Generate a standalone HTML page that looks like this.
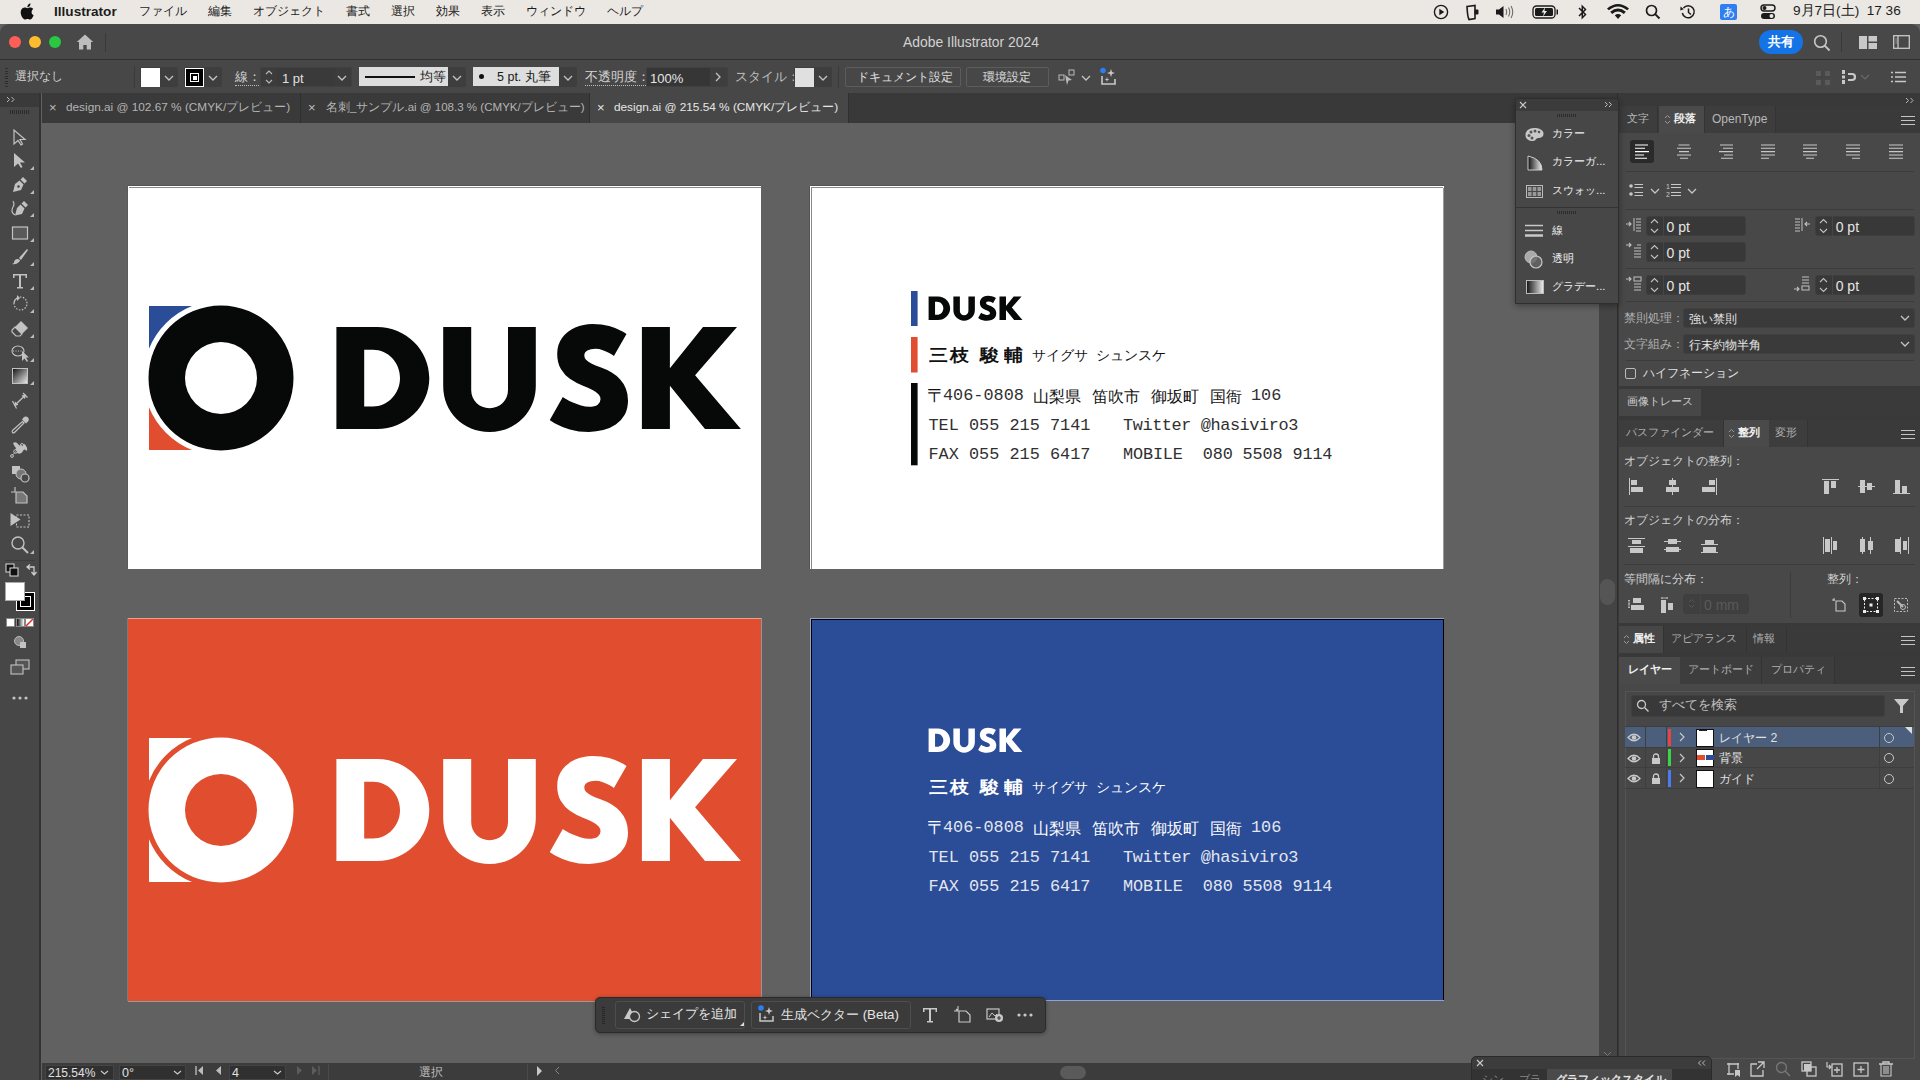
<!DOCTYPE html>
<html lang="ja"><head><meta charset="utf-8">
<style>
*{box-sizing:border-box;margin:0;padding:0}
html,body{width:1920px;height:1080px;overflow:hidden;background:#616161;font-family:"Liberation Sans",sans-serif;}
.a{position:absolute}
.t{position:absolute;white-space:nowrap;line-height:1}
svg{position:absolute;overflow:visible}
/* menubar */
#menubar{left:0;top:0;width:1920px;height:24px;background:#ebe8e3;color:#1c1c1c;font-size:11.8px}
#menubar .t{top:6px}
/* window */
#titlebar{left:0;top:24px;width:1920px;height:35px;background:#484848;border-top-left-radius:9px;border-top-right-radius:9px}
#ctrlbar{left:0;top:59px;width:1920px;height:34px;background:#474747;border-top:1px solid #2f2f2f}
#tabbar{left:42px;top:93px;width:1575px;height:30px;background:#393939}
#toolbar{left:0;top:93px;width:41px;height:987px;background:#474747;border-right:2px solid #333}
#canvas{left:42px;top:123px;width:1557px;height:940px;background:#616161}
#vscroll{left:1599px;top:123px;width:18px;height:940px;background:#444}
#dock{left:1617px;top:93px;width:303px;height:987px;background:#393939;border-left:1px solid #2e2e2e}
#status{left:42px;top:1063px;width:1557px;height:17px;background:#3c3c3c}
.ui{color:#cfcfcf;font-size:12px}
</style></head><body>

<!-- CANVAS -->
<div id="canvas" class="a"></div>

<svg width="1920" height="1080" style="left:0;top:0" viewBox="0 0 1920 1080">
<defs>
<g id="dusk">
<path fill-rule="evenodd" d="M336.4 326.9H377C405.9 326.9 429.3 349.8 429.3 378C429.3 406.2 405.9 429 377 429H336.4Z M364.2 349.7H373C388 349.7 400 362.4 400 378C400 393.6 388 406.5 373 406.5H364.2Z"/>
<path d="M443.2 326.9H471.2V390C471.2 400.5 479.2 408.2 489.6 408.2C500 408.2 508 400.5 508 390V326.9H535.8V386C535.8 412 515.8 431.9 489.5 431.9C463.2 431.9 443.2 412 443.2 386Z"/>
<path d="M592.4 324Q601.9 324 609.2 326.1Q616.6 328.3 621 330.7Q625.5 333.1 626.5 334L613.9 356Q612.7 355 609.7 353.3Q606.8 351.6 602.9 350.2Q599.1 348.8 595.3 348.8Q590.5 348.8 587.4 350.4Q584.3 352 584.3 355.4Q584.3 357.8 586 359.7Q587.6 361.6 591.3 363.4Q595 365.3 601.1 367.6Q606.8 369.6 611.7 372.5Q616.6 375.4 620.2 379.4Q623.9 383.4 625.9 388.7Q628 393.9 628 400.5Q628 408.8 624.7 414.7Q621.4 420.7 615.8 424.5Q610.2 428.3 603.3 430.1Q596.3 431.9 589 431.9Q578.2 431.9 569.8 429.4Q561.3 426.9 556.1 424Q550.9 421.1 549.8 420L562.8 397Q563.7 397.7 566.4 399.3Q569.1 400.9 572.9 402.6Q576.8 404.3 581 405.5Q585.2 406.8 589.1 406.8Q594.8 406.8 597.7 404.7Q600.5 402.7 600.5 399.2Q600.5 396.6 598.7 394.5Q597 392.4 593 390.3Q589.1 388.2 582.4 385.6Q576 383 570.2 379.1Q564.5 375.2 560.9 369Q557.2 362.9 557.2 353.7Q557.2 344.5 562.2 337.8Q567.2 331.2 575.2 327.6Q583.3 324 592.4 324Z"/>
<path d="M641.9 326.9H669.9V368.3L703 326.9H737L695.1 375.2L740.9 429H705L669.9 385.8V429H641.9Z"/>
</g>
<path id="ring" fill-rule="evenodd" d="M221 305.5A72.5 72.5 0 1 1 221 450.5A72.5 72.5 0 1 1 221 305.5Z M221 342A36 36 0 1 0 221 414A36 36 0 1 0 221 342Z"/>
<path id="cTop" d="M149 306H192A77.7 77.7 0 0 0 149 348.7Z"/>
<path id="cBot" d="M149 450H192A77.7 77.7 0 0 1 149 407.3Z"/>
</defs>
<!-- artboard TL -->
<rect x="128" y="185" width="633" height="1" fill="#555"/><rect x="128" y="186" width="633" height="383" fill="#fff"/><rect x="129" y="187" width="632" height="1" fill="#8a8a8a"/><rect x="127" y="186" width="1" height="383" fill="#5a5a5a"/>
<use href="#dusk" fill="#070908"/>
<use href="#ring" fill="#070908"/>
<use href="#cTop" fill="#2b4c96"/>
<use href="#cBot" fill="#e14d2f"/>
<!-- artboard TR -->
<rect x="810" y="185" width="634" height="1" fill="#555"/><rect x="809" y="186" width="1" height="383" fill="#555"/><rect x="810" y="186" width="634" height="383" fill="#fff"/><rect x="811" y="187" width="632" height="1" fill="#8a8a8a"/><rect x="811" y="187" width="1" height="382" fill="#8a8a8a"/><rect x="1443" y="188" width="1" height="381" fill="#9a9a9a"/>
<!-- artboard BL -->
<rect x="128" y="618" width="633" height="383" fill="#e14d2f"/><rect x="128" y="618" width="633" height="1" fill="#e9a08f"/><rect x="761" y="618" width="1" height="383" fill="#8a9aa0"/><rect x="128" y="1001" width="634" height="1" fill="#9a9a9a"/><rect x="127" y="618" width="1" height="383" fill="#7a7a7a"/>
<g transform="translate(0,432)" fill="#fff"><use href="#dusk"/><use href="#ring"/><use href="#cTop"/><use href="#cBot"/></g>
<!-- artboard BR -->
<rect x="810" y="618" width="634" height="383" fill="#8ea3d0"/><rect x="811" y="619" width="633" height="381" fill="#000"/><rect x="812" y="620" width="631" height="380" fill="#2b4c96"/>
<!-- small dusk -->
<use href="#dusk" fill="#070908" transform="translate(850.56 220.56) scale(0.232)"/>
<use href="#dusk" fill="#fff" transform="translate(850.56 652.56) scale(0.232)"/>
<rect x="911" y="291" width="6.6" height="35" fill="#2b4c96"/>
<rect x="911" y="337" width="6.6" height="35.5" fill="#e14d2f"/>
<rect x="911" y="383" width="6.6" height="82.3" fill="#070908"/>
</svg>

<!-- card texts -->
<div class="a cardTR" style="left:0;top:0px;color:#111"><div class="t" style="left:929px;top:346.500px;font-size:18px;font-weight:bold;transform:scale(1.05,0.94);transform-origin:0 0">三</div><div class="t" style="left:950px;top:346.500px;font-size:18px;font-weight:bold;transform:scale(1.05,0.94);transform-origin:0 0">枝</div><div class="t" style="left:979.5px;top:346.500px;font-size:18px;font-weight:bold;transform:scale(1.05,0.94);transform-origin:0 0">駿</div><div class="t" style="left:1004px;top:346.500px;font-size:18px;font-weight:bold;transform:scale(1.05,0.94);transform-origin:0 0">輔</div><div class="t" style="left:1032px;top:349px;font-size:13.5px">サイグサ</div><div class="t" style="left:1096px;top:349px;font-size:13.5px">シュンスケ</div><div class="t" style="left:927px;top:386px;font-size:19px">〒</div><div class="t" style="left:943px;top:388px;font-family:'Liberation Mono',monospace;font-size:16.87px;color:#303030">406-0808</div><div class="t" style="left:1033px;top:388px;font-size:16.3px">山梨県</div><div class="t" style="left:1092px;top:388px;font-size:16.3px">笛吹市</div><div class="t" style="left:1150.500px;top:388px;font-size:16.3px">御坂町</div><div class="t" style="left:1210px;top:388px;font-size:16.3px">国衙</div><div class="t" style="left:1251px;top:388px;font-family:'Liberation Mono',monospace;font-size:16.87px;color:#303030">106</div><div class="t" style="left:928.500px;top:418px;font-family:'Liberation Mono',monospace;font-size:16.87px;color:#303030">TEL 055 215 7141</div><div class="t" style="left:1123px;top:418px;font-family:'Liberation Mono',monospace;font-size:16.87px;color:#303030;letter-spacing:-0.4px">Twitter @hasiviro3</div><div class="t" style="left:928.500px;top:447px;font-family:'Liberation Mono',monospace;font-size:16.87px;color:#303030">FAX 055 215 6417</div><div class="t" style="left:1123px;top:447px;font-family:'Liberation Mono',monospace;font-size:16.87px;color:#303030;letter-spacing:-0.15px">MOBILE&nbsp; 080 5508 9114</div></div><div class="a cardBR" style="left:0;top:432px;color:#fff"><div class="t" style="left:929px;top:346.500px;font-size:18px;font-weight:bold;transform:scale(1.05,0.94);transform-origin:0 0">三</div><div class="t" style="left:950px;top:346.500px;font-size:18px;font-weight:bold;transform:scale(1.05,0.94);transform-origin:0 0">枝</div><div class="t" style="left:979.5px;top:346.500px;font-size:18px;font-weight:bold;transform:scale(1.05,0.94);transform-origin:0 0">駿</div><div class="t" style="left:1004px;top:346.500px;font-size:18px;font-weight:bold;transform:scale(1.05,0.94);transform-origin:0 0">輔</div><div class="t" style="left:1032px;top:349px;font-size:13.5px">サイグサ</div><div class="t" style="left:1096px;top:349px;font-size:13.5px">シュンスケ</div><div class="t" style="left:927px;top:386px;font-size:19px">〒</div><div class="t" style="left:943px;top:388px;font-family:'Liberation Mono',monospace;font-size:16.87px;color:#e2e6f0">406-0808</div><div class="t" style="left:1033px;top:388px;font-size:16.3px">山梨県</div><div class="t" style="left:1092px;top:388px;font-size:16.3px">笛吹市</div><div class="t" style="left:1150.500px;top:388px;font-size:16.3px">御坂町</div><div class="t" style="left:1210px;top:388px;font-size:16.3px">国衙</div><div class="t" style="left:1251px;top:388px;font-family:'Liberation Mono',monospace;font-size:16.87px;color:#e2e6f0">106</div><div class="t" style="left:928.500px;top:418px;font-family:'Liberation Mono',monospace;font-size:16.87px;color:#e2e6f0">TEL 055 215 7141</div><div class="t" style="left:1123px;top:418px;font-family:'Liberation Mono',monospace;font-size:16.87px;color:#e2e6f0;letter-spacing:-0.4px">Twitter @hasiviro3</div><div class="t" style="left:928.500px;top:447px;font-family:'Liberation Mono',monospace;font-size:16.87px;color:#e2e6f0">FAX 055 215 6417</div><div class="t" style="left:1123px;top:447px;font-family:'Liberation Mono',monospace;font-size:16.87px;color:#e2e6f0;letter-spacing:-0.15px">MOBILE&nbsp; 080 5508 9114</div></div>

<!-- MENUBAR -->
<div id="menubar" class="a">
<svg style="left:20px;top:3px" width="14" height="17" viewBox="0 0 14 17"><path fill="#111" d="M11.6 9.1c0-2 1.6-2.9 1.7-3-0.9-1.4-2.4-1.6-2.9-1.6-1.2-0.1-2.4 0.7-3 0.7-0.6 0-1.6-0.7-2.6-0.7C3.400 4.5 2.100 5.300 1.400 6.500 0 8.900 1 12.500 2.400 14.500 3.100 15.500 3.900 16.600 4.900 16.500c1-0.0 1.400-0.6 2.600-0.6 1.200 0 1.500 0.6 2.600 0.6 1.100 0 1.800-1 2.400-2 0.800-1.100 1.100-2.200 1.100-2.300-0.0-0.0-2.100-0.800-2.100-3.100zM9.700 3.100c0.500-0.700 0.900-1.600 0.800-2.600-0.800 0-1.800 0.500-2.300 1.200-0.500 0.600-1 1.600-0.800 2.500 0.900 0.100 1.800-0.400 2.300-1.100z"/></svg>
<div class="t" style="left:54px;top:5px;font-weight:bold;font-size:13.6px">Illustrator</div>
<div class="t" style="left:139px">ファイル</div>
<div class="t" style="left:208px">編集</div>
<div class="t" style="left:253px">オブジェクト</div>
<div class="t" style="left:346px">書式</div>
<div class="t" style="left:391px">選択</div>
<div class="t" style="left:436px">効果</div>
<div class="t" style="left:481px">表示</div>
<div class="t" style="left:526px">ウィンドウ</div>
<div class="t" style="left:607px">ヘルプ</div>
<svg style="left:1433px;top:4px" width="16" height="16" viewBox="0 0 16 16"><circle cx="8" cy="8" r="6.6" fill="none" stroke="#1a1a1a" stroke-width="1.4"/><path d="M6.3 4.8V11.2L11.3 8Z" fill="#1a1a1a"/></svg>
<svg style="left:1465px;top:3px" width="16" height="18" viewBox="0 0 16 18"><path d="M2 3.5L10 2.5V15.5L4 16.5Q2.500 14 2 3.5Z" fill="none" stroke="#1a1a1a" stroke-width="1.6"/><rect x="9.500" y="6.500" width="4" height="5" rx="1" fill="#1a1a1a"/></svg>
<svg style="left:1495px;top:4px" width="22" height="16" viewBox="0 0 22 16"><path d="M1 5.500H4L8.500 2V14L4 10.500H1Z" fill="#1a1a1a"/><path d="M11 5Q12.500 8 11 11M13.500 3.500Q16 8 13.500 12.500M16 2Q19.500 8 16 14" fill="none" stroke="#1a1a1a" stroke-width="1.1" opacity=".6"/></svg>
<svg style="left:1532px;top:5px" width="28" height="14" viewBox="0 0 28 14"><rect x="1" y="1" width="22" height="12" rx="3.500" fill="none" stroke="#1a1a1a" stroke-width="1.3"/><rect x="3" y="3" width="18" height="8" rx="1.500" fill="#1a1a1a"/><rect x="24.500" y="4.500" width="1.500" height="5" fill="#1a1a1a"/><path d="M13 2.500L9.500 7.500H12L11 11.500L15 6H12.500Z" fill="#ebe8e3"/></svg>
<svg style="left:1576px;top:3px" width="13" height="18" viewBox="0 0 13 18"><path d="M3 5L9.500 11.500L6.300 14.700V3.300L9.500 6.500L3 13" fill="none" stroke="#1a1a1a" stroke-width="1.500"/></svg>
<svg style="left:1607px;top:4px" width="22" height="16" viewBox="0 0 22 16"><path d="M11 15L7.800 11.300Q11 8.600 14.200 11.300Z M3.200 7.800Q11 1 18.800 7.800L16.800 10Q11 5.200 5.200 10Z M0 4.400Q11 -4.600 22 4.400L20.200 6.300Q11 -1.400 1.800 6.300Z" fill="#1a1a1a"/></svg>
<svg style="left:1645px;top:4px" width="16" height="16" viewBox="0 0 16 16"><circle cx="6.500" cy="6.500" r="5" fill="none" stroke="#1a1a1a" stroke-width="1.700"/><path d="M10.200 10.200L14.500 14.500" stroke="#1a1a1a" stroke-width="1.900"/></svg>
<svg style="left:1679px;top:4px" width="17" height="16" viewBox="0 0 17 16"><path d="M3.300 9A6 6 0 1 0 4.500 4" fill="none" stroke="#1a1a1a" stroke-width="1.500"/><path d="M1.500 2.500L4.800 5.200L1.300 6.500Z" fill="#1a1a1a"/><path d="M9.500 4.500V8.500L12 10.500" fill="none" stroke="#1a1a1a" stroke-width="1.500"/></svg>
<div class="a" style="left:1720px;top:4px;width:17px;height:16px;background:#2f7ff0;border-radius:2px;color:#fff;font-size:12px;line-height:16px;text-align:center">あ</div>
<svg style="left:1760px;top:4px" width="16" height="16" viewBox="0 0 16 16"><rect x="1" y="1" width="14" height="6" rx="3" fill="none" stroke="#1a1a1a" stroke-width="1.400"/><circle cx="4.500" cy="4" r="2" fill="#1a1a1a"/><rect x="1" y="9" width="14" height="6" rx="3" fill="#1a1a1a"/><circle cx="11.500" cy="12" r="2" fill="#ebe8e3"/></svg>
<div class="t" style="left:1793px;top:4px;font-size:13.6px">9月7日(土)&nbsp; 17 36</div>
</div>

<!-- WINDOW CHROME -->
<div id="titlebar" class="a">
<div class="a" style="left:9px;top:12px;width:12px;height:12px;border-radius:50%;background:#fe5f57"></div>
<div class="a" style="left:29px;top:12px;width:12px;height:12px;border-radius:50%;background:#febc2e"></div>
<div class="a" style="left:49px;top:12px;width:12px;height:12px;border-radius:50%;background:#28c840"></div>
<svg style="left:76px;top:10px" width="18" height="16" viewBox="0 0 18 16"><path d="M9 0.500L0.800 8H3V15.500H7.300V11H10.700V15.500H15V8H17.200Z" fill="#bdbdbd"/></svg>
<div class="a" style="left:105px;top:9px;width:1px;height:19px;background:#3a3a3a"></div>
<div class="t" style="left:903px;top:12px;font-size:13.9px;color:#d2d2d2">Adobe Illustrator 2024</div>
<div class="a" style="left:1759px;top:6px;width:44px;height:24px;border-radius:12px;background:#1473e6;color:#fff;font-size:13px;font-weight:bold;line-height:24px;text-align:center">共有</div>
<svg style="left:1813px;top:10px" width="18" height="18" viewBox="0 0 18 18"><circle cx="7.500" cy="7.500" r="5.800" fill="none" stroke="#c8c8c8" stroke-width="1.600"/><path d="M11.700 11.700L16.500 16.500" stroke="#c8c8c8" stroke-width="1.800"/></svg>
<div class="a" style="left:1841px;top:8px;width:1px;height:20px;background:#3a3a3a"></div>
<svg style="left:1859px;top:12px" width="18" height="13" viewBox="0 0 18 13"><rect x="0" y="0" width="8" height="13" fill="#c8c8c8"/><rect x="9.500" y="0" width="8.500" height="5.500" fill="#c8c8c8"/><rect x="9.500" y="7" width="8.500" height="6" fill="#c8c8c8"/></svg>
<svg style="left:1893px;top:11px" width="17" height="14" viewBox="0 0 17 14"><rect x="0.700" y="0.700" width="15.600" height="12.600" fill="none" stroke="#c8c8c8" stroke-width="1.300"/><path d="M5 1V13" stroke="#c8c8c8" stroke-width="1.300"/><path d="M2.500 4H3.700M2.500 6H3.700M2.500 8H3.700" stroke="#c8c8c8" stroke-width="0.900"/></svg>
</div>
<div id="ctrlbar" class="a">
<div class="a" style="left:5px;top:8px;width:3px;height:19px;background:repeating-linear-gradient(#2e2e2e 0 1px,transparent 1px 2.5px)"></div>
<div class="t ui" style="left:15px;top:11px;font-size:11.9px;color:#d0d0d0">選択なし</div>
<div class="a" style="left:134px;top:6px;width:1px;height:22px;background:#3b3b3b"></div>
<div class="a" style="left:140px;top:7px;width:38px;height:20px;border-radius:2px;background:#3e3e3e"></div>
<div class="a" style="left:141px;top:8px;width:19px;height:19px;background:#fff"></div>
<svg style="left:164px;top:15px" width="10" height="6" viewBox="0 0 10 6"><path d="M1 1L5 5L9 1" fill="none" stroke="#c4c4c4" stroke-width="1.300"/></svg>
<div class="a" style="left:184px;top:7px;width:38px;height:20px;border-radius:2px;background:#3e3e3e"></div>
<div class="a" style="left:185px;top:8px;width:19px;height:19px;background:#000;border:1px solid #fff"></div>
<div class="a" style="left:190px;top:13px;width:9px;height:9px;border:1.5px solid #fff"></div>
<div class="a" style="left:192.500px;top:15.500px;width:4px;height:4px;background:#fff"></div>
<svg style="left:208px;top:15px" width="10" height="6" viewBox="0 0 10 6"><path d="M1 1L5 5L9 1" fill="none" stroke="#c4c4c4" stroke-width="1.300"/></svg>
<div class="t ui" style="left:235px;top:11px;font-size:12.500px;color:#d4d4d4;border-bottom:1px dotted #bbb;padding-bottom:1px">線：</div>
<div class="a" style="left:260px;top:7px;width:92px;height:20px;border-radius:2px;background:#3c3c3c;border:1px solid #414141"></div>
<div class="a" style="left:277px;top:8px;width:58px;height:18px;background:#3a3a3a"></div>
<svg style="left:264px;top:9px" width="10" height="16" viewBox="0 0 10 16"><path d="M2 5L5 2L8 5M2 11L5 14L8 11" fill="none" stroke="#bbb" stroke-width="1.100"/></svg>
<div class="t" style="left:282px;top:12px;font-size:13px;color:#e0e0e0">1 pt</div>
<svg style="left:337px;top:15px" width="10" height="6" viewBox="0 0 10 6"><path d="M1 1L5 5L9 1" fill="none" stroke="#c4c4c4" stroke-width="1.300"/></svg>
<div class="a" style="left:359px;top:67px;display:none"></div>
<div class="a" style="left:359px;top:7px;width:89px;height:19px;background:#dedede"></div>
<div class="a" style="left:365px;top:16px;width:50px;height:2px;background:#111"></div>
<div class="t" style="left:420px;top:11px;font-size:12.500px;color:#1a1a1a">均等</div>
<div class="a" style="left:448px;top:7px;width:18px;height:20px;background:#3e3e3e;border-radius:0 2px 2px 0"></div>
<svg style="left:452px;top:15px" width="10" height="6" viewBox="0 0 10 6"><path d="M1 1L5 5L9 1" fill="none" stroke="#c4c4c4" stroke-width="1.300"/></svg>
<div class="a" style="left:473px;top:7px;width:86px;height:19px;background:#dedede"></div>
<div class="a" style="left:479px;top:14px;width:5px;height:5px;border-radius:50%;background:#111"></div>
<div class="t" style="left:497px;top:11px;font-size:12.500px;color:#1a1a1a">5 pt. 丸筆</div>
<div class="a" style="left:559px;top:7px;width:18px;height:20px;background:#3e3e3e;border-radius:0 2px 2px 0"></div>
<svg style="left:563px;top:15px" width="10" height="6" viewBox="0 0 10 6"><path d="M1 1L5 5L9 1" fill="none" stroke="#c4c4c4" stroke-width="1.300"/></svg>
<div class="t ui" style="left:585px;top:11px;font-size:12.500px;color:#d4d4d4;border-bottom:1px dotted #bbb;padding-bottom:1px">不透明度：</div>
<div class="a" style="left:646px;top:7px;width:82px;height:20px;border-radius:2px;background:#3e3e3e;border:1px solid #404040"></div>
<div class="a" style="left:647px;top:8px;width:63px;height:18px;background:#363636"></div>
<div class="t" style="left:650px;top:12px;font-size:13px;color:#e6e6e6">100%</div>
<svg style="left:715px;top:12px" width="6" height="10" viewBox="0 0 6 10"><path d="M1 1L5 5L1 9" fill="none" stroke="#c4c4c4" stroke-width="1.300"/></svg>
<div class="t ui" style="left:735px;top:11px;font-size:12.500px;color:#bdbdbd">スタイル：</div>
<div class="a" style="left:794px;top:7px;width:38px;height:20px;border-radius:2px;background:#3e3e3e"></div>
<div class="a" style="left:795px;top:8px;width:19px;height:19px;background:#e0e0e0"></div>
<svg style="left:818px;top:15px" width="10" height="6" viewBox="0 0 10 6"><path d="M1 1L5 5L9 1" fill="none" stroke="#c4c4c4" stroke-width="1.300"/></svg>
<div class="a" style="left:838px;top:6px;width:1px;height:22px;background:#3b3b3b"></div>
<div class="a" style="left:845px;top:7px;width:116px;height:20px;border-radius:2px;border:1px solid #5c5c5c"></div>
<div class="t" style="left:857px;top:11px;font-size:11.6px;color:#e0e0e0">ドキュメント設定</div>
<div class="a" style="left:966px;top:7px;width:83px;height:20px;border-radius:2px;border:1px solid #5c5c5c"></div>
<div class="t" style="left:983px;top:11px;font-size:12px;color:#e0e0e0">環境設定</div>
<svg style="left:1058px;top:67px;display:none"></svg>
<svg style="left:1058px;top:9px" width="18" height="17" viewBox="0 0 18 17"><rect x="1" y="6" width="5" height="5" fill="none" stroke="#bbb" stroke-width="1"/><rect x="11" y="1" width="5" height="5" fill="none" stroke="#bbb" stroke-width="1"/><path d="M7 6L14 11L10.500 11.500L9 16Z" fill="#bbb"/></svg>
<svg style="left:1081px;top:15px" width="10" height="6" viewBox="0 0 10 6"><path d="M1 1L5 5L9 1" fill="none" stroke="#c4c4c4" stroke-width="1.300"/></svg>
<svg style="left:1099px;top:7px" width="20" height="20" viewBox="0 0 20 20"><path d="M3 9V17H16V12" fill="none" stroke="#c8c8c8" stroke-width="1.600"/><path d="M12 2L13 5L16 6L13 7L12 10L11 7L8 6L11 5Z" fill="#c8c8c8"/><path d="M8 10L8.600 12L10.500 12.500L8.600 13L8 15L7.400 13L5.500 12.500L7.400 12Z" fill="#c8c8c8"/><circle cx="4" cy="3.500" r="2.800" fill="#2c7ff0"/></svg>
<svg style="left:1816px;top:11px" width="14" height="14" viewBox="0 0 14 14"><path d="M0 6H14M6 0V14" stroke="#444" stroke-width="1"/><rect x="0" y="0" width="5" height="5" fill="#5a5a5a"/><rect x="9" y="0" width="5" height="5" fill="#5a5a5a"/><rect x="0" y="9" width="5" height="5" fill="#5a5a5a"/><rect x="9" y="9" width="5" height="5" fill="#5a5a5a"/></svg>
<svg style="left:1842px;top:9px" width="22" height="16" viewBox="0 0 22 16"><rect x="0" y="1" width="3" height="4" fill="#c8c8c8"/><rect x="0" y="6.500" width="3" height="3" fill="#c8c8c8"/><rect x="0" y="11" width="3" height="4" fill="#c8c8c8"/><path d="M6 5H10Q13 5 13 8Q13 11 10 11H6" fill="none" stroke="#c8c8c8" stroke-width="2.200"/></svg>
<svg style="left:1860px;top:14px" width="10" height="6" viewBox="0 0 10 6"><path d="M1 1L5 5L9 1" fill="none" stroke="#6a6a6a" stroke-width="1.100"/></svg>
<svg style="left:1891px;top:11px" width="15" height="12" viewBox="0 0 15 12"><path d="M0 1.500H2M0 6H2M0 10.500H2M4 1.500H15M4 6H15M4 10.500H15" stroke="#c8c8c8" stroke-width="1.500"/></svg>
</div>
<div id="tabbar" class="a">
<div class="a" style="left:0;top:0;width:259px;height:30px;background:#3a3a3a;border-right:1px solid #2f2f2f"></div>
<div class="t" style="left:7px;top:8px;font-size:13px;color:#bdbdbd">×</div>
<div class="t" style="left:24px;top:9px;font-size:11.8px;color:#b4b4b4">design.ai @ 102.67 % (CMYK/プレビュー)</div>
<div class="a" style="left:259px;top:0;width:289px;height:30px;background:#3a3a3a;border-right:1px solid #2f2f2f"></div>
<div class="t" style="left:266px;top:8px;font-size:13px;color:#bdbdbd">×</div>
<div class="t" style="left:284px;top:9px;font-size:11.55px;color:#b4b4b4">名刺_サンプル.ai @ 108.3 % (CMYK/プレビュー)</div>
<div class="a" style="left:548px;top:0;width:259px;height:30px;background:#474747;border-right:1px solid #2f2f2f"></div>
<div class="t" style="left:555px;top:8px;font-size:13px;color:#e6e6e6">×</div>
<div class="t" style="left:572px;top:9px;font-size:11.8px;color:#e6e6e6">design.ai @ 215.54 % (CMYK/プレビュー)</div>
</div>
<div id="toolbar" class="a">
<div class="a" style="left:0;top:0;width:39px;height:14px;background:#3a3a3a"></div>
<svg style="left:6px;top:3px" width="10" height="7" viewBox="0 0 10 7"><path d="M1 1L3.500 3.500L1 6M5.500 1L8 3.500L5.500 6" fill="none" stroke="#bbb" stroke-width="1"/></svg>
<div class="a" style="left:10px;top:17px;width:20px;height:4px;background:repeating-linear-gradient(90deg,#2c2c2c 0 1px,transparent 1px 2px)"></div>
<svg style="left:10px;top:34.5px" width="20" height="20" viewBox="0 0 20 20"><path d="M4 2V16L8 12.500L11 17L12.500 16L10 11.500H15Z" fill="none" stroke="#c2c2c2" stroke-width="1.200"/></svg>
<svg style="left:10px;top:58.0px" width="20" height="20" viewBox="0 0 20 20"><path d="M4 2V16L8 12.500L11 17L12.500 16L10 11.500H15Z" fill="#c2c2c2"/></svg>
<svg style="left:10px;top:81.7px" width="20" height="20" viewBox="0 0 20 20"><path d="M13 2L17 6L14.500 8.500L10.500 4.500Z M9.500 5.500L13.500 9.500L11 15L3 17L5 9Z" fill="#c2c2c2"/><circle cx="8.500" cy="11.500" r="1.300" fill="#474747"/></svg>
<svg style="left:10px;top:105.0px" width="20" height="20" viewBox="0 0 20 20"><path d="M14 3L18 7L15.500 9.500L11.500 5.500Z M10.500 6.500L14.500 10.500L12 16L5 17.500L7 10Z" fill="#c2c2c2"/><path d="M5 17Q0 14 3 9Q5 6 3 3" fill="none" stroke="#c2c2c2" stroke-width="1.100"/></svg>
<svg style="left:10px;top:130.0px" width="20" height="20" viewBox="0 0 20 20"><rect x="2.500" y="4" width="15" height="12" fill="#5a5a5a" stroke="#c2c2c2" stroke-width="1.200"/></svg>
<svg style="left:10px;top:154.0px" width="20" height="20" viewBox="0 0 20 20"><path d="M17 2L9 11L11 13L18 3Z" fill="#c2c2c2"/><path d="M8 12Q4 12 4 16L2 17Q6 18 9 15Q10 14 10 13Z" fill="#c2c2c2"/></svg>
<svg style="left:10px;top:177.5px" width="20" height="20" viewBox="0 0 20 20"><path d="M3 3H17V7H15.500V4.500H11V16H13V17.500H7V16H9V4.500H4.500V7H3Z" fill="#c2c2c2"/></svg>
<svg style="left:10px;top:201.0px" width="20" height="20" viewBox="0 0 20 20"><path d="M4 9A6.500 6.500 0 1 0 7 4" fill="none" stroke="#c2c2c2" stroke-width="1.200" stroke-dasharray="1.500 1.500"/><path d="M4 9A6.500 6.500 0 0 1 7 4" fill="none" stroke="#c2c2c2" stroke-width="1.300"/><path d="M7 1L10 4L7 7Z" fill="#c2c2c2"/></svg>
<svg style="left:10px;top:226.0px" width="20" height="20" viewBox="0 0 20 20"><path d="M11 2L18 9L12 15L5 8Z" fill="#c2c2c2"/><path d="M5 8L12 15L10 17H6L2 13V11Z" fill="none" stroke="#c2c2c2" stroke-width="1.200"/></svg>
<svg style="left:10px;top:249.8px" width="20" height="20" viewBox="0 0 20 20"><ellipse cx="8" cy="8" rx="6" ry="5" fill="none" stroke="#c2c2c2" stroke-width="1.100"/><path d="M3 8H12" stroke="#c2c2c2" stroke-width="1" stroke-dasharray="1 1.500"/><path d="M12 8V18L14.500 15.500L17 19L18 18L16 14.500H19Z" fill="#c2c2c2"/></svg>
<svg style="left:10px;top:273.4px" width="20" height="20" viewBox="0 0 20 20"><defs><linearGradient id="gg" x1="0" y1="0" x2="1" y2="1"><stop offset="0" stop-color="#111"/><stop offset="1" stop-color="#eee"/></linearGradient></defs><rect x="2.500" y="2.500" width="15" height="15" fill="url(#gg)" stroke="#c2c2c2" stroke-width="1"/></svg>
<svg style="left:10px;top:298.0px" width="20" height="20" viewBox="0 0 20 20"><path d="M2.500 10L6.500 17.500M13 2L17.500 6.500" stroke="#c2c2c2" stroke-width="1.200"/><path d="M5.500 13.500L14.500 5" stroke="#c2c2c2" stroke-width="1.300"/><path d="M4 15L5 10.500L8.500 14Z M16 3.500L15 8L11.500 4.500Z" fill="#c2c2c2"/></svg>
<svg style="left:10px;top:322.0px" width="20" height="20" viewBox="0 0 20 20"><path d="M13.500 2.500Q16 0.500 18 2.500Q20 5 17.500 7L16 8.500L12 4.500Z" fill="#c2c2c2"/><path d="M12.500 6.500L14 8L5 17Q3.500 18.500 2.500 17.500Q1.500 16.500 3 15Z" fill="none" stroke="#c2c2c2" stroke-width="1.200"/></svg>
<svg style="left:10px;top:346.0px" width="20" height="20" viewBox="0 0 20 20"><path d="M3 4Q6 2 8 5Q10 8 12 6Q14 4 15.500 6Q18 9 17 12Q14 9 13 12Q11 16 7 14Q4 12 6 9Q4 7 3 4Z" fill="#c2c2c2"/><circle cx="5.500" cy="12.500" r="1.800" fill="#474747" stroke="#c2c2c2" stroke-width="1"/><circle cx="12" cy="6" r="1.500" fill="#474747" stroke="#c2c2c2" stroke-width="1"/><circle cx="2" cy="17" r="1.400" fill="none" stroke="#c2c2c2" stroke-width="1"/><path d="M2.500 16L12 6" stroke="#c2c2c2" stroke-width="0.800"/></svg>
<svg style="left:10px;top:369.6px" width="20" height="20" viewBox="0 0 20 20"><rect x="2" y="3" width="8" height="8" fill="#c2c2c2"/><circle cx="11" cy="11" r="5" fill="#777" stroke="#c2c2c2" stroke-width="1"/><circle cx="15" cy="15" r="4" fill="#474747" stroke="#c2c2c2" stroke-width="1.200"/></svg>
<svg style="left:10px;top:393.0px" width="20" height="20" viewBox="0 0 20 20"><path d="M5 1V6H1" fill="none" stroke="#c2c2c2" stroke-width="1.200"/><path d="M6 6H13L17 10V17H6Z" fill="#777" stroke="#c2c2c2" stroke-width="1.200"/></svg>
<svg style="left:10px;top:417.0px" width="20" height="20" viewBox="0 0 20 20"><path d="M0.500 3V16L10.500 9.500Z" fill="#c2c2c2"/><rect x="6.500" y="5" width="12.500" height="12" fill="none" stroke="#c2c2c2" stroke-width="1.100" stroke-dasharray="2 1.500"/></svg>
<svg style="left:10px;top:442.0px" width="20" height="20" viewBox="0 0 20 20"><circle cx="8" cy="8" r="6" fill="none" stroke="#c2c2c2" stroke-width="1.400"/><path d="M12.500 12.500L18 18" stroke="#c2c2c2" stroke-width="2"/></svg>
<svg style="left:30px;top:73.0px" width="4" height="4" viewBox="0 0 4 4"><path d="M4 0V4H0Z" fill="#bbb"/></svg><svg style="left:30px;top:96.7px" width="4" height="4" viewBox="0 0 4 4"><path d="M4 0V4H0Z" fill="#bbb"/></svg><svg style="left:30px;top:120.0px" width="4" height="4" viewBox="0 0 4 4"><path d="M4 0V4H0Z" fill="#bbb"/></svg><svg style="left:30px;top:145.0px" width="4" height="4" viewBox="0 0 4 4"><path d="M4 0V4H0Z" fill="#bbb"/></svg><svg style="left:30px;top:169.0px" width="4" height="4" viewBox="0 0 4 4"><path d="M4 0V4H0Z" fill="#bbb"/></svg><svg style="left:30px;top:192.5px" width="4" height="4" viewBox="0 0 4 4"><path d="M4 0V4H0Z" fill="#bbb"/></svg><svg style="left:30px;top:216.0px" width="4" height="4" viewBox="0 0 4 4"><path d="M4 0V4H0Z" fill="#bbb"/></svg><svg style="left:30px;top:241.0px" width="4" height="4" viewBox="0 0 4 4"><path d="M4 0V4H0Z" fill="#bbb"/></svg><svg style="left:30px;top:264.8px" width="4" height="4" viewBox="0 0 4 4"><path d="M4 0V4H0Z" fill="#bbb"/></svg><svg style="left:30px;top:288.4px" width="4" height="4" viewBox="0 0 4 4"><path d="M4 0V4H0Z" fill="#bbb"/></svg><svg style="left:30px;top:457.0px" width="4" height="4" viewBox="0 0 4 4"><path d="M4 0V4H0Z" fill="#bbb"/></svg>
<div class="a" style="left:5px;top:467px;width:30px;height:1px;background:#3c3c3c"></div>
<svg style="left:5px;top:470px" width="14" height="14" viewBox="0 0 14 14"><rect x="1" y="1" width="8" height="8" fill="#111" stroke="#ddd" stroke-width="1"/><rect x="5" y="5" width="8" height="8" fill="#111" stroke="#ddd" stroke-width="1"/></svg>
<svg style="left:25px;top:470px" width="13" height="14" viewBox="0 0 13 14"><path d="M2 4H9V11M5 1.500L2 4L5 6.500M6.500 9L9 12L11.500 9" fill="none" stroke="#ccc" stroke-width="1.300"/></svg>
<div class="a" style="left:15.500px;top:499px;width:19px;height:19px;background:#000;border:1.500px solid #fff"></div>
<div class="a" style="left:19.500px;top:503px;width:11px;height:11px;border:1.500px solid #fff;background:#000"></div>
<div class="a" style="left:5px;top:489px;width:20px;height:19px;background:#fff;border:1px solid #aaa"></div>
<div class="a" style="left:6px;top:525px;width:9px;height:9px;background:#fff;border:1px solid #888"></div>
<div class="a" style="left:16px;top:525px;width:9px;height:9px;background:linear-gradient(90deg,#111,#fff);border:1px solid #888"></div>
<svg style="left:25px;top:525px" width="9" height="9" viewBox="0 0 9 9"><rect x="0.500" y="0.500" width="8" height="8" fill="#fff" stroke="#888"/><path d="M1 8L8 1" stroke="#e22" stroke-width="1.500"/></svg>
<svg style="left:13px;top:542px" width="14" height="14" viewBox="0 0 14 14"><circle cx="6" cy="6" r="4.500" fill="#888" stroke="#bbb" stroke-width="1"/><rect x="7" y="7" width="6" height="6" fill="#c2c2c2"/></svg>
<svg style="left:10px;top:566px" width="20" height="16" viewBox="0 0 20 16"><rect x="6" y="1" width="13" height="9" fill="#555" stroke="#c2c2c2" stroke-width="1.100"/><rect x="1" y="6" width="12" height="9" fill="#555" stroke="#c2c2c2" stroke-width="1.100"/></svg>
<svg style="left:12px;top:603px" width="16" height="4" viewBox="0 0 16 4"><circle cx="2" cy="2" r="1.600" fill="#c2c2c2"/><circle cx="8" cy="2" r="1.600" fill="#c2c2c2"/><circle cx="14" cy="2" r="1.600" fill="#c2c2c2"/></svg>
</div>
<div id="vscroll" class="a"><div class="a" style="left:1px;top:456px;width:15px;height:26px;border-radius:8px;background:#555"></div><svg style="left:4px;top:928px" width="9" height="6" viewBox="0 0 9 6"><path d="M1 1L4.500 4.500L8 1" fill="none" stroke="#777" stroke-width="1"/></svg></div>
<div id="dock" class="a">
<!-- header strip -->
<svg style="left:287px;top:4px" width="10" height="7" viewBox="0 0 10 7"><path d="M1 1L3.500 3.500L1 6M5.500 1L8 3.500L5.500 6" fill="none" stroke="#bbb" stroke-width="1"/></svg>
<!-- panel 1: 文字 段落 OpenType -->
<div class="a" style="left:1px;top:13px;width:302px;height:27px;background:#3a3a3a"></div>
<div class="a" style="left:1px;top:13px;width:39px;height:27px;background:#3d3d3d;border-right:1px solid #333"></div>
<div class="t" style="left:9px;top:20px;font-size:11px;color:#b8b8b8">文字</div>
<div class="a" style="left:41px;top:13px;width:45px;height:27px;background:#4a4a4a"></div>
<svg style="left:46px;top:21px" width="7" height="11" viewBox="0 0 7 11"><path d="M1 4L3.500 1.500L6 4M1 7L3.500 9.500L6 7" fill="none" stroke="#9a9a9a" stroke-width="1"/></svg>
<div class="t" style="left:56px;top:20px;font-size:11px;color:#f0f0f0;font-weight:bold">段落</div>
<div class="a" style="left:86px;top:13px;width:72px;height:27px;background:#3d3d3d;border-right:1px solid #333;border-left:1px solid #333"></div>
<div class="t" style="left:94px;top:20px;font-size:12px;color:#b8b8b8">OpenType</div>
<svg style="left:283px;top:22px" width="14" height="11" viewBox="0 0 14 11"><path d="M0 1.500H14M0 5.500H14M0 9.500H14" stroke="#c4c4c4" stroke-width="1.150"/></svg>
<div class="a" style="left:1px;top:40px;width:301px;height:253px;background:#484848"></div>
<div class="a" style="left:12px;top:47px;width:24px;height:23px;border-radius:3px;background:#2a2a2a"></div>
<svg style="left:17px;top:51px" width="16" height="17" viewBox="0 0 16 17"><path d="M0 1H13M0 4.3H10M0 7.6H14M0 10.9H9M0 14.2H12" stroke="#fff" stroke-width="1.050"/></svg><svg style="left:59px;top:51px" width="16" height="17" viewBox="0 0 16 17"><path d="M1.5 1H12.5M0 4.3H14M2 7.6H12M0 10.9H14M3 14.2H11" stroke="#c8c8c8" stroke-width="1.050"/></svg><svg style="left:101px;top:51px" width="16" height="17" viewBox="0 0 16 17"><path d="M1 1H14M4 4.3H14M0 7.6H14M5 10.9H14M2 14.2H14" stroke="#c8c8c8" stroke-width="1.050"/></svg><svg style="left:143px;top:51px" width="16" height="17" viewBox="0 0 16 17"><path d="M0 1H14M0 4.3H14M0 7.6H14M0 10.9H14M0 14.2H8" stroke="#c8c8c8" stroke-width="1.050"/></svg><svg style="left:185px;top:51px" width="16" height="17" viewBox="0 0 16 17"><path d="M0 1H14M0 4.3H14M0 7.6H14M0 10.9H14M3 14.2H11" stroke="#c8c8c8" stroke-width="1.050"/></svg><svg style="left:228px;top:51px" width="16" height="17" viewBox="0 0 16 17"><path d="M0 1H14M0 4.3H14M0 7.6H14M0 10.9H14M6 14.2H14" stroke="#c8c8c8" stroke-width="1.050"/></svg><svg style="left:271px;top:51px" width="16" height="17" viewBox="0 0 16 17"><path d="M0 1H14M0 4.3H14M0 7.6H14M0 10.9H14M0 14.2H14" stroke="#c8c8c8" stroke-width="1.050"/></svg>
<div class="a" style="left:8px;top:78px;width:288px;height:1px;background:#3c3c3c"></div>
<svg style="left:11px;top:90px" width="15" height="14" viewBox="0 0 15 14"><circle cx="2" cy="3" r="1.800" fill="#c8c8c8"/><circle cx="2" cy="11" r="1.800" fill="#c8c8c8"/><path d="M5.500 1.500H14M5.500 4.500H14M5.500 9.500H14M5.500 12.500H14" stroke="#c8c8c8" stroke-width="1"/></svg>
<svg style="left:32px;top:95px" width="10" height="6" viewBox="0 0 10 6"><path d="M1 1L5 5L9 1" fill="none" stroke="#c4c4c4" stroke-width="1.300"/></svg>
<svg style="left:48px;top:89px" width="16" height="16" viewBox="0 0 16 16"><text x="0" y="7" font-size="7" fill="#c8c8c8" font-family="Liberation Sans">1</text><text x="0" y="15" font-size="7" fill="#c8c8c8" font-family="Liberation Sans">2</text><path d="M5 2.500H15M5 5.500H15M5 10.500H15M5 13.500H15" stroke="#c8c8c8" stroke-width="1"/></svg>
<svg style="left:69px;top:95px" width="10" height="6" viewBox="0 0 10 6"><path d="M1 1L5 5L9 1" fill="none" stroke="#c4c4c4" stroke-width="1.300"/></svg>
<div class="a" style="left:8px;top:116px;width:288px;height:1px;background:#3c3c3c"></div>
<div class="a" style="left:27.6px;top:122.6px;width:100px;height:20px;border-radius:3px;background:#383838;border:1px solid #3e3e3e"></div>
<div class="a" style="left:44.6px;top:122.6px;width:1px;height:20px;background:#464646"></div>
<svg style="left:31.6px;top:124.6px" width="9" height="16" viewBox="0 0 9 16"><path d="M1 5L4.500 1.500L8 5M1 11L4.500 14.500L8 11" fill="none" stroke="#c0c0c0" stroke-width="1.100"/></svg>
<div class="t" style="left:48.6px;top:126.6px;font-size:14px;color:#e6e6e6">0 pt</div><div class="a" style="left:196.7px;top:122.6px;width:100px;height:20px;border-radius:3px;background:#383838;border:1px solid #3e3e3e"></div>
<div class="a" style="left:213.7px;top:122.6px;width:1px;height:20px;background:#464646"></div>
<svg style="left:200.7px;top:124.6px" width="9" height="16" viewBox="0 0 9 16"><path d="M1 5L4.500 1.500L8 5M1 11L4.500 14.500L8 11" fill="none" stroke="#c0c0c0" stroke-width="1.100"/></svg>
<div class="t" style="left:217.7px;top:126.6px;font-size:14px;color:#e6e6e6">0 pt</div><div class="a" style="left:27.6px;top:148.7px;width:100px;height:20px;border-radius:3px;background:#383838;border:1px solid #3e3e3e"></div>
<div class="a" style="left:44.6px;top:148.7px;width:1px;height:20px;background:#464646"></div>
<svg style="left:31.6px;top:150.7px" width="9" height="16" viewBox="0 0 9 16"><path d="M1 5L4.500 1.500L8 5M1 11L4.500 14.500L8 11" fill="none" stroke="#c0c0c0" stroke-width="1.100"/></svg>
<div class="t" style="left:48.6px;top:152.7px;font-size:14px;color:#e6e6e6">0 pt</div><div class="a" style="left:27.6px;top:181.9px;width:100px;height:20px;border-radius:3px;background:#383838;border:1px solid #3e3e3e"></div>
<div class="a" style="left:44.6px;top:181.9px;width:1px;height:20px;background:#464646"></div>
<svg style="left:31.6px;top:183.9px" width="9" height="16" viewBox="0 0 9 16"><path d="M1 5L4.500 1.500L8 5M1 11L4.500 14.500L8 11" fill="none" stroke="#c0c0c0" stroke-width="1.100"/></svg>
<div class="t" style="left:48.6px;top:185.9px;font-size:14px;color:#e6e6e6">0 pt</div><div class="a" style="left:196.7px;top:181.9px;width:100px;height:20px;border-radius:3px;background:#383838;border:1px solid #3e3e3e"></div>
<div class="a" style="left:213.7px;top:181.9px;width:1px;height:20px;background:#464646"></div>
<svg style="left:200.7px;top:183.9px" width="9" height="16" viewBox="0 0 9 16"><path d="M1 5L4.500 1.500L8 5M1 11L4.500 14.500L8 11" fill="none" stroke="#c0c0c0" stroke-width="1.100"/></svg>
<div class="t" style="left:217.7px;top:185.9px;font-size:14px;color:#e6e6e6">0 pt</div><svg style="left:8px;top:124px" width="16" height="15" viewBox="0 0 16 15"><path d="M0 7H5M3 5L5 7L3 9" fill="none" stroke="#c0c0c0" stroke-width="1.100"/><path d="M8 1V14M10 2H15M10 5H15M10 8H15M10 11H15M10 14H15" stroke="#c0c0c0" stroke-width="1"/></svg>
<svg style="left:176px;top:124px" width="16" height="15" viewBox="0 0 16 15"><path d="M16 7H11M13 5L11 7L13 9" fill="none" stroke="#c0c0c0" stroke-width="1.100"/><path d="M8 1V14M1 2H6M1 5H6M1 8H6M1 11H6M1 14H6" stroke="#c0c0c0" stroke-width="1"/></svg>
<svg style="left:8px;top:150px" width="16" height="15" viewBox="0 0 16 15"><path d="M0 2H5M3 0L5 2L3 4" fill="none" stroke="#c0c0c0" stroke-width="1.100"/><path d="M8 5H15M8 8H15M8 11H15M8 14H15M11 2H15" stroke="#c0c0c0" stroke-width="1"/></svg>
<div class="a" style="left:8px;top:175px;width:288px;height:1px;background:#3c3c3c"></div>
<svg style="left:8px;top:183px" width="16" height="15" viewBox="0 0 16 15"><path d="M0 3H5M3 1L5 3L3 5" fill="none" stroke="#c0c0c0" stroke-width="1.100"/><rect x="8" y="1" width="7" height="4" fill="none" stroke="#c0c0c0" stroke-width="1"/><path d="M8 8H15M8 11H15M8 14H15" stroke="#c0c0c0" stroke-width="1"/></svg>
<svg style="left:176px;top:183px" width="16" height="15" viewBox="0 0 16 15"><path d="M0 13H5M3 11L5 13L3 15" fill="none" stroke="#c0c0c0" stroke-width="1.100"/><path d="M8 1H15M8 4H15M8 7H15" stroke="#c0c0c0" stroke-width="1"/><rect x="8" y="10" width="7" height="4" fill="none" stroke="#c0c0c0" stroke-width="1"/></svg>
<div class="a" style="left:8px;top:208px;width:288px;height:1px;background:#3c3c3c"></div>
<div class="t" style="left:6px;top:219px;font-size:12px;color:#b0b0b0">禁則処理：</div>
<div class="a" style="left:64.700px;top:214.900px;width:232px;height:20px;border-radius:3px;background:#3a3a3a;border:1px solid #404040"></div>
<div class="t" style="left:71px;top:219.5px;font-size:12px;color:#e6e6e6">強い禁則</div>
<svg style="left:282px;top:222px" width="10" height="6" viewBox="0 0 10 6"><path d="M1 1L5 5L9 1" fill="none" stroke="#c4c4c4" stroke-width="1.300"/></svg>
<div class="t" style="left:6px;top:245px;font-size:12px;color:#b0b0b0">文字組み：</div>
<div class="a" style="left:64.700px;top:240.700px;width:232px;height:20px;border-radius:3px;background:#3a3a3a;border:1px solid #404040"></div>
<div class="t" style="left:71px;top:245.5px;font-size:12px;color:#e6e6e6">行末約物半角</div>
<svg style="left:282px;top:248px" width="10" height="6" viewBox="0 0 10 6"><path d="M1 1L5 5L9 1" fill="none" stroke="#c4c4c4" stroke-width="1.300"/></svg>
<div class="a" style="left:8px;top:266.800px;width:288px;height:1px;background:#3c3c3c"></div>
<div class="a" style="left:7px;top:274.500px;width:11px;height:11px;border:1px solid #bbb;border-radius:2px"></div>
<div class="t" style="left:24.600px;top:274px;font-size:12px;color:#e0e0e0">ハイフネーション</div>
<!-- collapsed 画像トレース -->
<div class="a" style="left:1px;top:296px;width:302px;height:27px;background:#3a3a3a"></div>
<div class="a" style="left:1px;top:296px;width:82px;height:27px;background:#474747"></div>
<div class="t" style="left:9px;top:303px;font-size:11px;color:#d0d0d0">画像トレース</div>
<!-- panel: pathfinder/align/transform -->
<div class="a" style="left:1px;top:327px;width:302px;height:26.500px;background:#3a3a3a"></div>
<div class="a" style="left:1px;top:327px;width:105px;height:26.500px;background:#3d3d3d;border-right:1px solid #333"></div>
<div class="t" style="left:8px;top:334px;font-size:11px;color:#b0b0b0">パスファインダー</div>
<div class="a" style="left:106px;top:327px;width:45px;height:26.500px;background:#4a4a4a"></div>
<svg style="left:110px;top:335px" width="7" height="11" viewBox="0 0 7 11"><path d="M1 4L3.500 1.500L6 4M1 7L3.500 9.500L6 7" fill="none" stroke="#9a9a9a" stroke-width="1"/></svg>
<div class="t" style="left:120px;top:334px;font-size:11px;color:#f0f0f0;font-weight:bold">整列</div>
<div class="a" style="left:151px;top:327px;width:39px;height:26.500px;background:#3d3d3d;border-right:1px solid #333"></div>
<div class="t" style="left:157px;top:334px;font-size:11px;color:#b0b0b0">変形</div>
<svg style="left:283px;top:336px" width="14" height="11" viewBox="0 0 14 11"><path d="M0 1.500H14M0 5.500H14M0 9.500H14" stroke="#c4c4c4" stroke-width="1.150"/></svg>
<div class="a" style="left:1px;top:353.500px;width:301px;height:176px;background:#484848"></div>
<div class="t" style="left:6px;top:362px;font-size:12px;color:#d0d0d0">オブジェクトの整列：</div>
<svg style="left:10.0px;top:385.2px" width="17" height="17" viewBox="0 0 17 17"><path d="M1.500 0V17" stroke="#c8c8c8" stroke-width="1"/><rect x="3" y="2" width="6" height="5" fill="#c8c8c8"/><rect x="3" y="9" width="12" height="5" fill="#c8c8c8"/></svg><svg style="left:46.3px;top:385.2px" width="17" height="17" viewBox="0 0 17 17"><path d="M8.500 0V17" stroke="#c8c8c8" stroke-width="1"/><rect x="5" y="2" width="7" height="5" fill="#c8c8c8"/><rect x="2" y="9" width="13" height="5" fill="#c8c8c8"/></svg><svg style="left:83.1px;top:385.2px" width="17" height="17" viewBox="0 0 17 17"><path d="M15.500 0V17" stroke="#c8c8c8" stroke-width="1"/><rect x="8" y="2" width="6" height="5" fill="#c8c8c8"/><rect x="1" y="9" width="13" height="5" fill="#c8c8c8"/></svg><svg style="left:203.5px;top:385.2px" width="17" height="17" viewBox="0 0 17 17"><path d="M0 1.500H17" stroke="#c8c8c8" stroke-width="1"/><rect x="2" y="3" width="5" height="13" fill="#c8c8c8"/><rect x="9" y="3" width="5" height="7" fill="#c8c8c8"/></svg><svg style="left:239.5px;top:385.2px" width="17" height="17" viewBox="0 0 17 17"><path d="M0 8.500H17" stroke="#c8c8c8" stroke-width="1"/><rect x="2" y="2" width="5" height="13" fill="#c8c8c8"/><rect x="9" y="5" width="5" height="7" fill="#c8c8c8"/></svg><svg style="left:275.3px;top:385.2px" width="17" height="17" viewBox="0 0 17 17"><path d="M0 15.500H17" stroke="#c8c8c8" stroke-width="1"/><rect x="2" y="2" width="5" height="13" fill="#c8c8c8"/><rect x="9" y="8" width="5" height="7" fill="#c8c8c8"/></svg><div class="a" style="left:6px;top:412.500px;width:291px;height:1px;background:#3c3c3c"></div><div class="t" style="left:6px;top:421px;font-size:12px;color:#d0d0d0">オブジェクトの分布：</div><svg style="left:10.0px;top:444.4px" width="17" height="17" viewBox="0 0 17 17"><path d="M0 1.500H17M0 9.500H17" stroke="#c8c8c8" stroke-width="1"/><rect x="4" y="3" width="9" height="4" fill="#c8c8c8"/><rect x="2" y="11" width="13" height="5" fill="#c8c8c8"/></svg><svg style="left:46.3px;top:444.4px" width="17" height="17" viewBox="0 0 17 17"><path d="M0 4.500H17M0 12.500H17" stroke="#c8c8c8" stroke-width="1"/><rect x="4" y="2" width="9" height="5" fill="#c8c8c8"/><rect x="2" y="10" width="13" height="5" fill="#c8c8c8"/></svg><svg style="left:83.1px;top:444.4px" width="17" height="17" viewBox="0 0 17 17"><path d="M0 7.500H17M0 15.500H17" stroke="#c8c8c8" stroke-width="1"/><rect x="4" y="3" width="9" height="4" fill="#c8c8c8"/><rect x="2" y="10" width="13" height="5" fill="#c8c8c8"/></svg><svg style="left:203.5px;top:444.4px" width="17" height="17" viewBox="0 0 17 17"><path d="M1.500 0V17M9.500 0V17" stroke="#c8c8c8" stroke-width="1"/><rect x="3" y="2" width="5" height="13" fill="#c8c8c8"/><rect x="11" y="4" width="4" height="9" fill="#c8c8c8"/></svg><svg style="left:239.5px;top:444.4px" width="17" height="17" viewBox="0 0 17 17"><path d="M4.500 0V17M12.500 0V17" stroke="#c8c8c8" stroke-width="1"/><rect x="2" y="2" width="5" height="13" fill="#c8c8c8"/><rect x="10" y="4" width="5" height="9" fill="#c8c8c8"/></svg><svg style="left:275.3px;top:444.4px" width="17" height="17" viewBox="0 0 17 17"><path d="M7.500 0V17M15.500 0V17" stroke="#c8c8c8" stroke-width="1"/><rect x="2" y="2" width="5" height="13" fill="#c8c8c8"/><rect x="10" y="4" width="4" height="9" fill="#c8c8c8"/></svg><div class="a" style="left:6px;top:471px;width:291px;height:1px;background:#3c3c3c"></div><div class="t" style="left:6px;top:480px;font-size:12px;color:#d0d0d0">等間隔に分布：</div><div class="t" style="left:209px;top:480px;font-size:12px;color:#d0d0d0">整列：</div><div class="a" style="left:172px;top:479px;width:1px;height:46px;background:#3c3c3c"></div><svg style="left:10.0px;top:503.5px" width="17" height="17" viewBox="0 0 17 17"><path d="M1 3V7M0 4L1 3L2 4M0 10L1 11L2 10M1 7V11M0 7H2" stroke="#c8c8c8" stroke-width="0.800" fill="none"/><rect x="5" y="1" width="8" height="5" fill="#c8c8c8"/><rect x="3" y="8" width="13" height="5" fill="#c8c8c8"/></svg><svg style="left:40.5px;top:503.5px" width="17" height="17" viewBox="0 0 17 17"><path d="M3 0V2M8 0V2M2 1H9" stroke="#c8c8c8" stroke-width="0.800"/><rect x="2" y="3" width="5" height="13" fill="#c8c8c8"/><rect x="9" y="6" width="5" height="7" fill="#c8c8c8"/></svg><div class="a" style="left:65px;top:501px;width:66px;height:20px;border-radius:3px;background:#3f3f3f;border:1px solid #3e3e3e"></div>
<div class="a" style="left:82px;top:501px;width:1px;height:20px;background:#464646"></div>
<svg style="left:70px;top:505px" width="7" height="11" viewBox="0 0 7 11"><path d="M1 4L3.500 1.500L6 4M1 7L3.500 9.500L6 7" fill="none" stroke="#555" stroke-width="1"/></svg>
<div class="t" style="left:86px;top:505px;font-size:14px;color:#5a5a5a">0 mm</div><svg style="left:213px;top:504px" width="16" height="15" viewBox="0 0 16 15"><path d="M1 3H4M3 1V4" stroke="#c8c8c8" stroke-width="1"/><path d="M5 4H11L14 7V14H5Z" fill="none" stroke="#c8c8c8" stroke-width="1.100"/></svg>
<div class="a" style="left:241px;top:500.300px;width:24px;height:23.500px;border-radius:3px;background:#262626"></div>
<svg style="left:245px;top:504px" width="16" height="16" viewBox="0 0 16 16"><rect x="1.500" y="1.500" width="13" height="13" fill="none" stroke="#eee" stroke-width="1" stroke-dasharray="2 1.500"/><rect x="0" y="0" width="3" height="3" fill="#eee"/><rect x="13" y="0" width="3" height="3" fill="#eee"/><rect x="0" y="13" width="3" height="3" fill="#eee"/><rect x="13" y="13" width="3" height="3" fill="#eee"/><rect x="6.500" y="6.500" width="3" height="3" fill="#eee"/></svg>
<svg style="left:275px;top:504px" width="16" height="16" viewBox="0 0 16 16"><rect x="1.500" y="1.500" width="13" height="13" fill="none" stroke="#bbb" stroke-width="1" stroke-dasharray="2 1.500"/><path d="M4 4L10 10" stroke="#bbb" stroke-width="2"/><circle cx="10" cy="10" r="2.500" fill="none" stroke="#bbb"/></svg>

<!-- collapsed 属性 -->
<div class="a" style="left:1px;top:533px;width:302px;height:26.500px;background:#3a3a3a"></div>
<div class="a" style="left:1px;top:533px;width:45px;height:26.500px;background:#474747;border-right:1px solid #333"></div>
<svg style="left:5px;top:541px" width="7" height="11" viewBox="0 0 7 11"><path d="M1 4L3.500 1.500L6 4M1 7L3.500 9.500L6 7" fill="none" stroke="#9a9a9a" stroke-width="1"/></svg>
<div class="t" style="left:15px;top:540px;font-size:11px;color:#f0f0f0;font-weight:bold">属性</div>
<div class="a" style="left:46px;top:533px;width:83px;height:26.500px;border-right:1px solid #333"></div>
<div class="t" style="left:53px;top:540px;font-size:11px;color:#b0b0b0">アピアランス</div>
<div class="a" style="left:129px;top:533px;width:40px;height:26.500px;border-right:1px solid #333"></div>
<div class="t" style="left:135px;top:540px;font-size:11px;color:#b0b0b0">情報</div>
<svg style="left:283px;top:542px" width="14" height="11" viewBox="0 0 14 11"><path d="M0 1.500H14M0 5.500H14M0 9.500H14" stroke="#c4c4c4" stroke-width="1.150"/></svg>
<!-- layers panel -->
<div class="a" style="left:1px;top:564px;width:302px;height:26.500px;background:#3a3a3a"></div>
<div class="a" style="left:1px;top:564px;width:61px;height:26.500px;background:#4a4a4a"></div>
<div class="t" style="left:10px;top:571px;font-size:11px;color:#f0f0f0;font-weight:bold">レイヤー</div>
<div class="a" style="left:62px;top:564px;width:82px;height:26.500px;background:#3d3d3d;border-right:1px solid #333"></div>
<div class="t" style="left:70px;top:571px;font-size:11px;color:#b0b0b0">アートボード</div>
<div class="a" style="left:144px;top:564px;width:73px;height:26.500px;background:#3d3d3d;border-right:1px solid #333"></div>
<div class="t" style="left:153px;top:571px;font-size:11px;color:#b0b0b0">プロパティ</div>
<svg style="left:283px;top:573px" width="14" height="11" viewBox="0 0 14 11"><path d="M0 1.500H14M0 5.500H14M0 9.500H14" stroke="#c4c4c4" stroke-width="1.150"/></svg>
<div class="a" style="left:1px;top:590.500px;width:301px;height:397px;background:#484848"></div>
<div class="a" style="left:6.500px;top:597.800px;width:290px;height:368px;border:1px solid #545454;background:#474747"></div>
<div class="a" style="left:13px;top:602px;width:254px;height:21.700px;border-radius:3px;background:#393939;border:1px solid #404040"></div>
<svg style="left:18px;top:606px" width="14" height="14" viewBox="0 0 14 14"><circle cx="5.500" cy="5.500" r="4" fill="none" stroke="#c8c8c8" stroke-width="1.300"/><path d="M8.500 8.500L12.500 12.500" stroke="#c8c8c8" stroke-width="1.500"/></svg>
<div class="t" style="left:41px;top:606px;font-size:12.5px;color:#c0c0c0">すべてを検索</div>
<svg style="left:276px;top:606px" width="15" height="14" viewBox="0 0 15 14"><path d="M0 0H15L9 7V14H6V7Z" fill="#c8c8c8"/></svg>
<div class="a" style="left:7px;top:633px;width:289px;height:1px;background:#3e3e3e"></div>
<div class="a" style="left:7px;top:634px;width:289px;height:20.500px;background:#4b5e7b;border-bottom:1px solid #3e3e3e"></div><div class="a" style="left:27px;top:634px;width:1px;height:20.500px;background:#3e3e3e"></div><div class="a" style="left:48px;top:634px;width:1px;height:20.500px;background:#3e3e3e"></div><div class="a" style="left:260.500px;top:634px;width:1px;height:20.500px;background:#3e3e3e"></div><svg style="left:9px;top:640px" width="14" height="9" viewBox="0 0 14 9"><path d="M1 4.500Q7 -2 13 4.500Q7 11 1 4.500Z" fill="none" stroke="#c8c8c8" stroke-width="1.300"/><circle cx="7" cy="4.500" r="2.300" fill="#c8c8c8"/></svg><div class="a" style="left:50px;top:635.5px;width:3px;height:17px;background:#e84444"></div><svg style="left:61px;top:639px" width="6" height="10" viewBox="0 0 6 10"><path d="M1 1L5 5L1 9" fill="none" stroke="#c8c8c8" stroke-width="1.200"/></svg><div class="a" style="left:77.800px;top:635.5px;width:18px;height:18px;background:#fff;border:1px solid #111"></div><div class="t" style="left:101px;top:638.5px;font-size:12.3px;color:#e0e0e0">レイヤー 2</div><div class="a" style="left:265.500px;top:639.5px;width:10px;height:10px;border-radius:50%;border:1.200px solid #c8c8c8"></div><div class="a" style="left:7px;top:654.5px;width:289px;height:20.500px;background:transparent;border-bottom:1px solid #3e3e3e"></div><div class="a" style="left:27px;top:654.5px;width:1px;height:20.500px;background:#3e3e3e"></div><div class="a" style="left:48px;top:654.5px;width:1px;height:20.500px;background:#3e3e3e"></div><div class="a" style="left:260.500px;top:654.5px;width:1px;height:20.500px;background:#3e3e3e"></div><svg style="left:9px;top:660.5px" width="14" height="9" viewBox="0 0 14 9"><path d="M1 4.500Q7 -2 13 4.500Q7 11 1 4.500Z" fill="none" stroke="#c8c8c8" stroke-width="1.300"/><circle cx="7" cy="4.500" r="2.300" fill="#c8c8c8"/></svg><svg style="left:33px;top:659.5px" width="10" height="11" viewBox="0 0 10 11"><path d="M2.500 5V3.500Q2.500 1 5 1Q7.500 1 7.500 3.500V5" fill="none" stroke="#c8c8c8" stroke-width="1.300"/><rect x="1" y="5" width="8" height="6" fill="#c8c8c8"/></svg><div class="a" style="left:50px;top:656.0px;width:3px;height:17px;background:#3bd446"></div><svg style="left:61px;top:659.5px" width="6" height="10" viewBox="0 0 6 10"><path d="M1 1L5 5L1 9" fill="none" stroke="#c8c8c8" stroke-width="1.200"/></svg><div class="a" style="left:77.800px;top:656.0px;width:18px;height:18px;background:#fff;border:1px solid #111"></div><div class="t" style="left:101px;top:659.0px;font-size:12.3px;color:#e0e0e0">背景</div><div class="a" style="left:265.500px;top:660.0px;width:10px;height:10px;border-radius:50%;border:1.200px solid #c8c8c8"></div><div class="a" style="left:7px;top:675px;width:289px;height:20.500px;background:transparent;border-bottom:1px solid #3e3e3e"></div><div class="a" style="left:27px;top:675px;width:1px;height:20.500px;background:#3e3e3e"></div><div class="a" style="left:48px;top:675px;width:1px;height:20.500px;background:#3e3e3e"></div><div class="a" style="left:260.500px;top:675px;width:1px;height:20.500px;background:#3e3e3e"></div><svg style="left:9px;top:681px" width="14" height="9" viewBox="0 0 14 9"><path d="M1 4.500Q7 -2 13 4.500Q7 11 1 4.500Z" fill="none" stroke="#c8c8c8" stroke-width="1.300"/><circle cx="7" cy="4.500" r="2.300" fill="#c8c8c8"/></svg><svg style="left:33px;top:680px" width="10" height="11" viewBox="0 0 10 11"><path d="M2.500 5V3.500Q2.500 1 5 1Q7.500 1 7.500 3.500V5" fill="none" stroke="#c8c8c8" stroke-width="1.300"/><rect x="1" y="5" width="8" height="6" fill="#c8c8c8"/></svg><div class="a" style="left:50px;top:676.5px;width:3px;height:17px;background:#4b7bf0"></div><svg style="left:61px;top:680px" width="6" height="10" viewBox="0 0 6 10"><path d="M1 1L5 5L1 9" fill="none" stroke="#c8c8c8" stroke-width="1.200"/></svg><div class="a" style="left:77.800px;top:676.5px;width:18px;height:18px;background:#fff;border:1px solid #111"></div><div class="t" style="left:101px;top:679.5px;font-size:12.3px;color:#e0e0e0">ガイド</div><div class="a" style="left:265.500px;top:680.5px;width:10px;height:10px;border-radius:50%;border:1.200px solid #c8c8c8"></div><div class="a" style="left:79px;top:662px;width:8px;height:5px;background:#e14d2f"></div><div class="a" style="left:88px;top:662px;width:8px;height:5px;background:#2b4c96"></div><svg style="left:287px;top:634px" width="7" height="7" viewBox="0 0 7 7"><path d="M0 0H7V7Z" fill="#ddd"/></svg><div class="a" style="left:81px;top:637px;width:8px;height:1px;background:#222"></div><svg style="left:107.5px;top:968px" width="16" height="16" viewBox="0 0 16 16"><path d="M3 2V14M1 3H13M1 13H8M12 2V8" stroke="#c8c8c8" stroke-width="1.300" fill="none"/><path d="M9 9H14V16L11.500 14L9 16Z" fill="#c8c8c8"/></svg><svg style="left:130.8px;top:968px" width="16" height="16" viewBox="0 0 16 16"><path d="M8 3H2V15H14V9" fill="none" stroke="#c8c8c8" stroke-width="1.300"/><path d="M9 1H15V7M15 1L8 8" fill="none" stroke="#c8c8c8" stroke-width="1.300"/></svg><svg style="left:156.7px;top:968px" width="16" height="16" viewBox="0 0 16 16"><circle cx="6.500" cy="6.500" r="5" fill="none" stroke="#777" stroke-width="1.300"/><path d="M10 10L15 15" stroke="#777" stroke-width="1.600"/></svg><svg style="left:182.5px;top:968px" width="16" height="16" viewBox="0 0 16 16"><rect x="1" y="1" width="9" height="9" fill="none" stroke="#c8c8c8" stroke-width="1.300"/><rect x="6" y="6" width="9" height="9" fill="none" stroke="#c8c8c8" stroke-width="1.300"/><rect x="3" y="3" width="7" height="7" fill="#c8c8c8"/></svg><svg style="left:208.3px;top:968px" width="16" height="16" viewBox="0 0 16 16"><path d="M1 1V6H5M3 4L5 6L3 8" fill="none" stroke="#c8c8c8" stroke-width="1.200"/><rect x="6" y="3" width="10" height="12" fill="none" stroke="#c8c8c8" stroke-width="1.300"/><path d="M11 6V12M8 9H14" stroke="#c8c8c8" stroke-width="1.300"/></svg><svg style="left:235.3px;top:968px" width="16" height="16" viewBox="0 0 16 16"><rect x="1" y="2" width="14" height="13" fill="none" stroke="#c8c8c8" stroke-width="1.300"/><path d="M8 5V12M4.500 8.500H11.500" stroke="#c8c8c8" stroke-width="1.300"/></svg><svg style="left:260.3px;top:968px" width="16" height="16" viewBox="0 0 16 16"><path d="M1 3H15M5 3V1H11V3" fill="none" stroke="#c8c8c8" stroke-width="1.300"/><path d="M3 3V15H13V3M6 5V13M8 5V13M10 5V13" fill="none" stroke="#c8c8c8" stroke-width="1.100"/></svg></div>
<div id="status" class="a">
<div class="a" style="left:3px;top:2px;width:69px;height:15px;background:#303030;border:1px solid #444"></div>
<div class="t" style="left:6px;top:4px;font-size:12px;color:#e0e0e0">215.54%</div>
<svg style="left:58px;top:7px" width="9" height="5" viewBox="0 0 9 5"><path d="M1 1L4.500 4L8 1" fill="none" stroke="#ccc" stroke-width="1.100"/></svg>
<div class="a" style="left:77px;top:2px;width:67px;height:15px;background:#303030;border:1px solid #444"></div>
<div class="t" style="left:80px;top:4px;font-size:12.500px;color:#e0e0e0">0°</div>
<svg style="left:131px;top:7px" width="9" height="5" viewBox="0 0 9 5"><path d="M1 1L4.500 4L8 1" fill="none" stroke="#ccc" stroke-width="1.100"/></svg>
<svg style="left:153px;top:3px" width="9" height="9" viewBox="0 0 9 9"><path d="M1 0V9" stroke="#bbb" stroke-width="1.400"/><path d="M8 0V9L3 4.500Z" fill="#bbb"/></svg>
<svg style="left:173px;top:3px" width="7" height="9" viewBox="0 0 7 9"><path d="M6 0V9L1 4.500Z" fill="#bbb"/></svg>
<div class="a" style="left:187px;top:2px;width:57px;height:15px;background:#303030;border:1px solid #444"></div>
<div class="t" style="left:190px;top:4px;font-size:12.500px;color:#e0e0e0">4</div>
<svg style="left:231px;top:7px" width="9" height="5" viewBox="0 0 9 5"><path d="M1 1L4.500 4L8 1" fill="none" stroke="#ccc" stroke-width="1.100"/></svg>
<svg style="left:254px;top:3px" width="7" height="9" viewBox="0 0 7 9"><path d="M1 0V9L6 4.500Z" fill="#5c5c5c"/></svg>
<svg style="left:269px;top:3px" width="9" height="9" viewBox="0 0 9 9"><path d="M8 0V9" stroke="#5c5c5c" stroke-width="1.400"/><path d="M1 0V9L6 4.500Z" fill="#5c5c5c"/></svg>
<div class="a" style="left:286px;top:1px;width:1px;height:16px;background:#4a4a4a"></div>
<div class="t" style="left:377px;top:4px;font-size:11.500px;color:#bdbdbd">選択</div>
<div class="a" style="left:485px;top:1px;width:1px;height:16px;background:#4a4a4a"></div>
<svg style="left:494px;top:3px" width="7" height="10" viewBox="0 0 7 10"><path d="M1 0V10L6 5Z" fill="#c8c8c8"/></svg>
<svg style="left:512px;top:3px" width="6" height="9" viewBox="0 0 6 9"><path d="M5 1L1.500 4.500L5 8" fill="none" stroke="#888" stroke-width="1"/></svg>
<div class="a" style="left:1018px;top:3px;width:26px;height:13px;border-radius:7px;background:#5a5a5a"></div>
</div>
<!-- floating panel (color etc) -->
<div class="a" style="left:1515px;top:98px;width:104px;height:206px;background:#474747;border:1px solid #2e2e2e;border-radius:4px 4px 0 0;box-shadow:0 2px 6px rgba(0,0,0,.35)"></div>
<div class="a" style="left:1516px;top:99px;width:102px;height:12px;background:#3b3b3b;border-radius:3px 3px 0 0"></div>
<svg style="left:1519px;top:101px" width="8" height="8" viewBox="0 0 8 8"><path d="M1 1L7 7M7 1L1 7" stroke="#c8c8c8" stroke-width="1.200"/></svg>
<svg style="left:1604px;top:101px" width="9" height="7" viewBox="0 0 9 7"><path d="M1 1L3.500 3.500L1 6M5 1L7.500 3.500L5 6" fill="none" stroke="#bbb" stroke-width="1"/></svg>
<div class="a" style="left:1557px;top:114px;width:20px;height:3px;background:repeating-linear-gradient(90deg,#2c2c2c 0 1px,transparent 1px 2px)"></div>
<div class="a" style="left:1516px;top:206.500px;width:102px;height:1px;background:#333"></div>
<div class="a" style="left:1557px;top:211px;width:20px;height:3px;background:repeating-linear-gradient(90deg,#2c2c2c 0 1px,transparent 1px 2px)"></div>
<svg style="left:1525px;top:127px" width="19" height="15" viewBox="0 0 19 15"><path d="M9 1C4 1 0.500 4 0.500 8C0.500 12 4 14 8 14C11 14 11 11 13 11C16 11 18.500 10 18.500 6.500C18.500 3 14 1 9 1Z" fill="#c8c8c8"/><circle cx="4" cy="8.500" r="1.500" fill="#555"/><circle cx="7" cy="11" r="1.500" fill="#555"/><circle cx="6" cy="5" r="1.500" fill="#555"/><circle cx="10" cy="4" r="1.500" fill="#555"/><circle cx="14" cy="5" r="1.300" fill="#555"/></svg>
<div class="t" style="left:1552px;top:128px;font-size:11.3px;color:#ededed">カラー</div>
<svg style="left:1527px;top:155px" width="16" height="16" viewBox="0 0 16 16"><defs><linearGradient id="cg" x1="0" y1="0" x2="1" y2="0"><stop offset="0" stop-color="#111"/><stop offset="1" stop-color="#eee"/></linearGradient></defs><path d="M1 1V15H15Q15 4 1 1Z" fill="url(#cg)" stroke="#ccc" stroke-width="1"/></svg>
<div class="t" style="left:1552px;top:156px;font-size:11.3px;color:#ededed">カラーガ...</div>
<svg style="left:1526px;top:185px" width="17" height="13" viewBox="0 0 17 13"><rect x="0.500" y="0.500" width="16" height="12" fill="none" stroke="#bbb" stroke-width="1"/><rect x="2" y="2" width="3.500" height="4" fill="#999"/><rect x="6.750" y="2" width="3.500" height="4" fill="#999"/><rect x="11.500" y="2" width="3.500" height="4" fill="#999"/><rect x="2" y="7" width="3.500" height="4" fill="#999"/><rect x="6.750" y="7" width="3.500" height="4" fill="#999"/><rect x="11.500" y="7" width="3.500" height="4" fill="#999"/></svg>
<div class="t" style="left:1552px;top:185px;font-size:11.3px;color:#ededed">スウォッ...</div>
<svg style="left:1525px;top:224px" width="18" height="14" viewBox="0 0 18 14"><path d="M0 1.500H18M0 6.500H18" stroke="#c8c8c8" stroke-width="1.500"/><path d="M0 11.500H18" stroke="#c8c8c8" stroke-width="2.500"/></svg>
<div class="t" style="left:1552px;top:225px;font-size:11.3px;color:#ededed">線</div>
<svg style="left:1524px;top:250px" width="20" height="19" viewBox="0 0 20 19"><circle cx="7" cy="7" r="6" fill="#aaa" stroke="#bbb" stroke-width="1"/><circle cx="12" cy="12" r="6" fill="#666" fill-opacity=".8" stroke="#c8c8c8" stroke-width="1.200"/></svg>
<div class="t" style="left:1552px;top:253px;font-size:11.3px;color:#ededed">透明</div>
<svg style="left:1526px;top:280px" width="18" height="14" viewBox="0 0 18 14"><defs><linearGradient id="gr2" x1="0" y1="0" x2="1" y2="0"><stop offset="0" stop-color="#111"/><stop offset="1" stop-color="#f0f0f0"/></linearGradient></defs><rect x="0.500" y="0.500" width="17" height="13" fill="url(#gr2)" stroke="#bbb" stroke-width="1"/></svg>
<div class="t" style="left:1552px;top:281px;font-size:11.3px;color:#ededed">グラデー...</div>



<!-- contextual task bar -->
<div class="a" style="left:595px;top:997px;width:451px;height:36px;border-radius:5px;background:#3b3b3b;border:1px solid #2a2a2a;box-shadow:0 1px 4px rgba(0,0,0,.35)"></div>
<div class="a" style="left:602px;top:1007px;width:3px;height:17px;background:repeating-linear-gradient(#262626 0 1px,transparent 1px 2px)"></div>
<div class="a" style="left:615px;top:1001px;width:130px;height:28px;border-radius:3px;border:1px solid #4e4e4e"></div>
<svg style="left:623px;top:1006px" width="18" height="17" viewBox="0 0 18 17"><path d="M1 13L7 2L13 13Z" fill="#c8c8c8"/><circle cx="11.500" cy="10.500" r="5" fill="#3b3b3b" stroke="#c8c8c8" stroke-width="1.300"/></svg>
<div class="t" style="left:646px;top:1008px;font-size:12.9px;color:#e6e6e6">シェイプを追加</div>
<svg style="left:740px;top:1022px" width="4" height="4" viewBox="0 0 4 4"><path d="M4 0V4H0Z" fill="#ddd"/></svg>
<div class="a" style="left:751px;top:1001px;width:160px;height:28px;border-radius:3px;border:1px solid #4e4e4e"></div>
<svg style="left:757px;top:1004px" width="20" height="20" viewBox="0 0 20 20"><path d="M3 9V17H16V12" fill="none" stroke="#c8c8c8" stroke-width="1.500"/><path d="M12 3L13 6L16 7L13 8L12 11L11 8L8 7L11 6Z" fill="#c8c8c8"/><path d="M8 11L8.600 13L10.500 13.500L8.600 14L8 16L7.400 14L5.500 13.500L7.400 13Z" fill="#c8c8c8"/><circle cx="4" cy="4" r="2.800" fill="#2c7ff0"/></svg>
<div class="t" style="left:781px;top:1008px;font-size:13.3px;color:#e6e6e6">生成ベクター (Beta)</div>
<svg style="left:922px;top:1007px" width="16" height="16" viewBox="0 0 16 16"><path d="M1 1H15V5H13.500V2.500H9V14H11V15.500H5V14H7V2.500H2.500V5H1Z" fill="#c8c8c8"/></svg>
<svg style="left:954px;top:1005px" width="18" height="18" viewBox="0 0 18 18"><path d="M4 1V6H0M2 4L4 6" fill="none" stroke="#c8c8c8" stroke-width="1.100"/><path d="M5 6H12L16 10V17H5Z" fill="none" stroke="#c8c8c8" stroke-width="1.200"/></svg>
<svg style="left:986px;top:1006px" width="18" height="17" viewBox="0 0 18 17"><rect x="1" y="3" width="12" height="10" fill="none" stroke="#c8c8c8" stroke-width="1.200"/><path d="M3 11L6 7L9 10L11 8" fill="none" stroke="#c8c8c8" stroke-width="1"/><circle cx="13" cy="12" r="4" fill="#c8c8c8"/><path d="M13 10V14M11 12H15" stroke="#3b3b3b" stroke-width="1.200"/></svg>
<svg style="left:1017px;top:1013px" width="16" height="4" viewBox="0 0 16 4"><circle cx="2" cy="2" r="1.600" fill="#c8c8c8"/><circle cx="8" cy="2" r="1.600" fill="#c8c8c8"/><circle cx="14" cy="2" r="1.600" fill="#c8c8c8"/></svg>
<!-- bottom floating panel -->
<div class="a" style="left:1471px;top:1055.500px;width:241px;height:30px;border-radius:5px 5px 0 0;background:#3c3c3c;border:1px solid #2a2a2a"></div>
<svg style="left:1476px;top:1059px" width="8" height="8" viewBox="0 0 8 8"><path d="M1 1L7 7M7 1L1 7" stroke="#c8c8c8" stroke-width="1.200"/></svg>
<svg style="left:1697px;top:1060px" width="9" height="6" viewBox="0 0 9 6"><path d="M4 0.500L1.500 3L4 5.500M8 0.500L5.500 3L8 5.500" fill="none" stroke="#bbb" stroke-width="1"/></svg>
<div class="a" style="left:1472px;top:1069px;width:239px;height:11px;background:#333"></div>
<div class="a" style="left:1547px;top:1069px;width:125px;height:11px;background:#4a4a4a"></div>
<div class="t" style="left:1482px;top:1074px;font-size:11px;color:#888">シン</div>
<div class="t" style="left:1519px;top:1074px;font-size:11px;color:#888">ブラ</div>
<div class="t" style="left:1556px;top:1074px;font-size:11px;color:#e6e6e6;font-weight:bold">グラフィックスタイル</div>
</body></html>
